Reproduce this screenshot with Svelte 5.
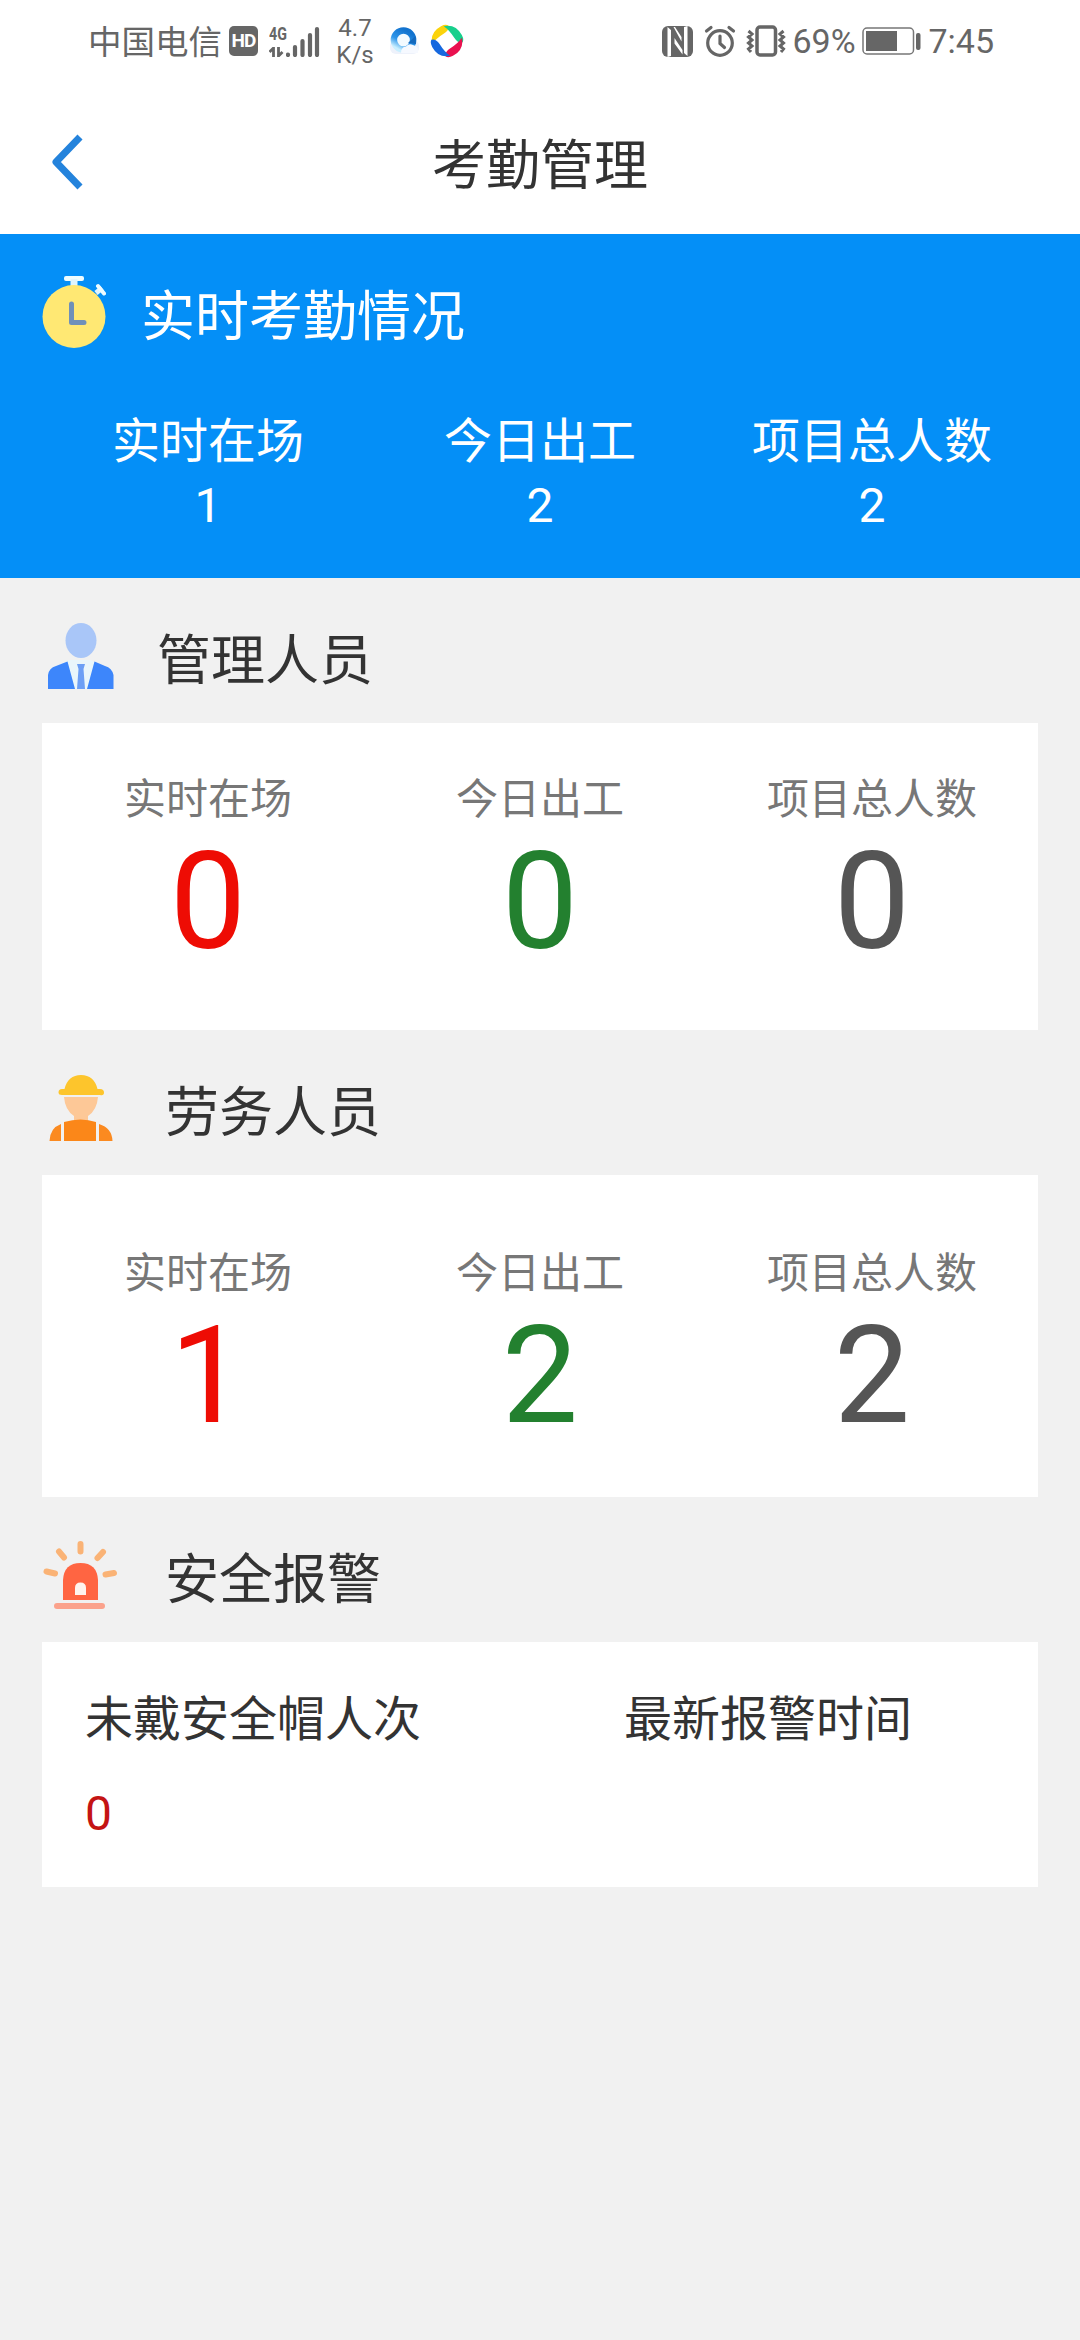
<script>
  const summary = [
    { label: '实时在场', value: 1 },
    { label: '今日出工', value: 2 },
    { label: '项目总人数', value: 2 }
  ];
  const managers = [
    { label: '实时在场', value: 0, tone: 'red' },
    { label: '今日出工', value: 0, tone: 'green' },
    { label: '项目总人数', value: 0, tone: 'gray' }
  ];
  const workers = [
    { label: '实时在场', value: 1, tone: 'red' },
    { label: '今日出工', value: 2, tone: 'green' },
    { label: '项目总人数', value: 2, tone: 'gray' }
  ];
  const petals = [
    { color: '#fbd30b', angle: -22 },
    { color: '#18cf8c', angle: 68 },
    { color: '#e9114f', angle: 158 },
    { color: '#1668df', angle: 248 }
  ];
</script>

{#snippet stats(items)}
  {#each items as item}
    <div class="stat">
      <span class="stat-label">{item.label}</span>
      <span class="stat-value {item.tone}">{item.value}</span>
    </div>
  {/each}
{/snippet}

<div class="screen">
  <div class="status">
    <span class="carrier">中国电信</span>
    <span class="hd">HD</span>
    <div class="signal">
      <div class="net">
        <span class="gen">4G</span>
        <svg width="16" height="10" viewBox="0 0 16 10">
          <path d="M0.500 5L4.500 1V10M9.500 0V9L13.500 5" fill="none" stroke="#666" stroke-width="2.800" />
        </svg>
      </div>
      <svg class="bars" width="34" height="31" viewBox="0 0 34 31">
        <path d="M2 28.500V29M9 21V29M16.500 15V29M24 9V29M31 3V29" fill="none" stroke="#666" stroke-width="4.200" stroke-linecap="round" />
      </svg>
    </div>
    <div class="speed"><span>4.7</span><span>K/s</span></div>
    <svg class="app-a" width="32" height="32" viewBox="0 0 32 32">
      <defs>
        <linearGradient id="ring" x1="0.8" y1="0.1" x2="0.3" y2="1">
          <stop offset="0" stop-color="#1273cf" />
          <stop offset="0.6" stop-color="#2f96ea" />
          <stop offset="1" stop-color="#c9efff" />
        </linearGradient>
      </defs>
      <rect x="1" y="15" width="29" height="14" rx="6" fill="#eef2fb" />
      <circle cx="14.500" cy="15" r="9.600" fill="#f3faff" stroke="url(#ring)" stroke-width="6.500" />
      <path d="M19 18L26.500 11L27 19Z" fill="#1569bd" />
      <path d="M12 28Q12 22 17 21.500Q20 18 24 20Q30 21 29 28Z" fill="#f6f9ff" />
    </svg>
    <svg class="app-b" width="34" height="34" viewBox="0 0 34 34">
      {#each petals as petal}
        <path
          d="M2 14.500Q4 2.500 17 1Q22 0.500 24 3Q24 7.500 17 9Q8 10.500 2 14.500Z"
          fill={petal.color}
          transform="rotate({petal.angle} 17 17)"
        />
      {/each}
    </svg>
    <div class="status-right">
      <svg class="nfc" width="31" height="31" viewBox="0 0 31 31">
        <rect width="31" height="31" rx="6" fill="#666" />
        <path d="M5.500 1L9 4V30L5.500 31ZM25.500 30L22 27V1L25.500 0ZM12.500 12L20.500 24V28.500L12.500 17.500ZM11.500 1H13L19.500 11V15.500Z" fill="#fff" />
      </svg>
      <svg class="alarm" width="32" height="32" viewBox="0 0 32 32" fill="none" stroke="#666" stroke-width="3.200" stroke-linecap="round">
        <circle cx="16" cy="18" r="12.300" />
        <path d="M16 11V18.500L20.500 22.500M2.500 6L7 2.500M29.500 6L25 2.500" />
      </svg>
      <svg class="vibrate" width="40" height="32" viewBox="0 0 40 32" fill="none" stroke="#666">
        <rect x="11" y="2" width="18.500" height="28" rx="3" stroke-width="3.500" />
        <path d="M2.500 6L6 9L2.500 12L6 15L2.500 18L6 21L2.500 24L5 27M37.500 6L34 9L37.500 12L34 15L37.500 18L34 21L37.500 24L35 27" stroke-width="3" />
      </svg>
      <span class="pct">69%</span>
      <svg class="battery" width="59" height="28" viewBox="0 0 59 28">
        <rect x="1" y="1" width="50.500" height="26" rx="4" fill="none" stroke="#777" stroke-width="1.500" />
        <rect x="4" y="4" width="31" height="20" fill="#666" />
        <rect x="54" y="6" width="4.500" height="17" rx="2" fill="#666" />
      </svg>
      <span class="time">7:45</span>
    </div>
  </div>

  <header>
    <svg class="back" width="36" height="60" viewBox="0 0 36 60">
      <path d="M33 5L9 30L33 55" fill="none" stroke="#2483dc" stroke-width="7" stroke-linejoin="round" />
    </svg>
    <h1>考勤管理</h1>
  </header>

  <section class="hero">
    <div class="hero-head">
      <svg width="64" height="74" viewBox="0 0 64 74">
        <rect x="22" y="1" width="20" height="5" rx="2" fill="#eefcff" />
        <rect x="28.500" y="4" width="7" height="9" fill="#dff5ff" />
        <path d="M54 18L60 13" stroke="#dff5ff" stroke-width="5" />
        <path d="M56 11L62 18.500" stroke="#eefcff" stroke-width="4" stroke-linecap="round" />
        <circle cx="32" cy="41.500" r="31.500" fill="#ffe873" />
        <path d="M29.500 29V47.500H42" fill="none" stroke="#6f90b9" stroke-width="5" stroke-linecap="round" stroke-linejoin="round" />
      </svg>
      <h2>实时考勤情况</h2>
    </div>
    <div class="hero-stats">
      {@render stats(summary)}
    </div>
  </section>

  <section class="group">
    <div class="group-head first">
      <svg width="76" height="76" viewBox="0 0 76 76">
        <path d="M6 68V54Q6 48 12 46L28 39H48L64 46Q71 48 71 54V68Z" fill="#e9f6fb" />
        <ellipse cx="39" cy="19.500" rx="15.500" ry="17.500" fill="#a9c6f8" />
        <path d="M6 68V54Q7 47 14 45L25.500 40.500L33 68Z" fill="#3d86fb" />
        <path d="M71.500 68V54Q70 47 63 45L52.500 40.500L45 68Z" fill="#3d86fb" />
        <path d="M35 43H43L41.500 48L43 68H35L36.500 48Z" fill="#6c9ff5" />
      </svg>
      <h3>管理人员</h3>
    </div>
    <div class="card people">{@render stats(managers)}</div>
  </section>

  <section class="group">
    <div class="group-head">
      <svg width="76" height="76" viewBox="0 0 76 76">
        <path d="M22 27H56Q55 40 46 46V52H32V46Q23 40 22 27Z" fill="#fdc897" />
        <path d="M16.500 22.500Q16.500 19 20 19H22.500Q26 5 39 5T55.500 19H58Q62 19 62 22.500T58 25H20Q16.500 25 16.500 22.500Z" fill="#fdc52c" />
        <path d="M22 52Q39 47 54 52V71H22Z" fill="#fb8719" />
        <path d="M7.500 71Q8 58 19 54V71ZM70.500 71Q70 58 57 54V71Z" fill="#fb8a20" />
      </svg>
      <h3>劳务人员</h3>
    </div>
    <div class="card people labor">{@render stats(workers)}</div>
  </section>

  <section class="group">
    <div class="group-head alert">
      <svg width="76" height="76" viewBox="0 0 76 76">
        <path d="M38.500 4V11.500M17 11.500L22 17.500M61 12L55.500 18M4.500 31.500L13 33.500M72 33L63.500 34.500" stroke="#fab376" stroke-width="6" stroke-linecap="round" />
        <path d="M21 60V40Q22 23 38.500 23T56 40V60Z" fill="#ff6542" />
        <path d="M33 55V48Q33 42.500 38.500 42.500T44 48V55Z" fill="#fff4ee" />
        <rect x="12" y="63" width="51" height="6" rx="3" fill="#fba28c" />
      </svg>
      <h3>安全报警</h3>
    </div>
    <div class="card warn">
      <div class="warn-col">
        <span>未戴安全帽人次</span>
        <span class="warn-count">0</span>
      </div>
      <div class="warn-col"><span>最新报警时间</span></div>
    </div>
  </section>
</div>

<style>
  :global(body) { background: #f1f1f1; }
  .screen {
    width: 1080px;
    height: 2340px;
    overflow: hidden;
    background: #f1f1f1;
    color: #333;
    font-family: Roboto, 'Noto Sans CJK SC', sans-serif;
  }
  svg { display: block; flex: none; }
  h1, h2, h3 { margin: 0; font-size: 54px; font-weight: 400; line-height: 60px; white-space: nowrap; }
  .status {
    box-sizing: border-box;
    height: 84px;
    padding: 0 86px 2px 88px;
    display: flex;
    align-items: center;
    background: #fff;
    color: #666;
    white-space: nowrap;
  }
  .carrier { width: 134px; padding-top: 3px; font-size: 33.500px; line-height: 40px; }
  .hd {
    width: 29px;
    height: 30px;
    margin-left: 7px;
    border-radius: 5px;
    background: #666;
    color: #fff;
    font-size: 19px;
    font-weight: 700;
    line-height: 30px;
    text-align: center;
    letter-spacing: -1px;
  }
  .signal { display: flex; margin-left: 11px; height: 31px; }
  .net { width: 17px; display: flex; flex-direction: column; justify-content: space-between; }
  .gen {
    font-size: 19px;
    font-weight: 700;
    line-height: 15px;
    transform: scaleX(0.75);
    transform-origin: left;
  }
  .speed {
    width: 36px;
    margin-left: 17px;
    padding-top: 2px;
    display: flex;
    flex-direction: column;
    align-items: center;
    font-size: 24px;
    line-height: 27px;
  }
  .app-a { margin-left: 16px; }
  .app-b { margin-left: 9px; }
  .status-right { margin-left: auto; display: flex; align-items: center; font-size: 34px; line-height: 40px; }
  .alarm { margin-left: 11px; }
  .vibrate { margin-left: 10px; }
  .pct { margin-left: 6px; width: 63px; }
  .battery { margin-left: 7px; }
  .time { margin-left: 7px; }
  header {
    height: 150px;
    display: grid;
    grid-template-columns: 1fr auto 1fr;
    background: #fff;
  }
  .back { margin: 48px 0 0 47px; }
  h1 { padding-top: 53px; }
  .hero { height: 344px; background: #048ff7; color: #fff; }
  .hero-head { display: flex; padding: 41px 0 0 42px; gap: 35px; height: 135px; box-sizing: border-box; }
  .hero-head h2 { padding-top: 13px; }
  .hero-stats, .people { display: grid; grid-template-columns: repeat(3, 332px); }
  .hero-stats { margin: 0 42px; padding-top: 41px; font-size: 48px; }
  .stat { display: flex; flex-direction: column; align-items: center; white-space: nowrap; }
  .hero-stats .stat-label, .hero-stats .stat-value { line-height: 64px; }
  .group-head { display: flex; height: 145px; box-sizing: border-box; padding: 40px 0 0 42px; gap: 47px; }
  .group-head h3 { padding-top: 14px; }
  .group-head.first { gap: 39px; padding-top: 43px; }
  .group-head.first h3 { padding-top: 11px; }
  .group-head.alert { padding-top: 43px; }
  .group-head.alert h3 { padding-top: 11px; }
  .card { box-sizing: border-box; width: 996px; margin: 0 42px; background: #fff; }
  .people { height: 307px; padding-top: 52px; }
  .labor { height: 322px; padding-top: 74px; }
  .people .stat-label { font-size: 42px; line-height: 50px; color: #777; }
  .people .stat-value { font-size: 136px; line-height: 154px; }
  .red { color: #ee0c04; }
  .green { color: #23802f; }
  .gray { color: #555; }
  .warn {
    height: 245px;
    padding: 48px 43px 0;
    display: grid;
    grid-template-columns: 539px 1fr;
    font-size: 48px;
    line-height: 60px;
  }
  .warn-col { display: flex; flex-direction: column; gap: 34px; }
  .warn-count { color: #c41414; }
</style>
